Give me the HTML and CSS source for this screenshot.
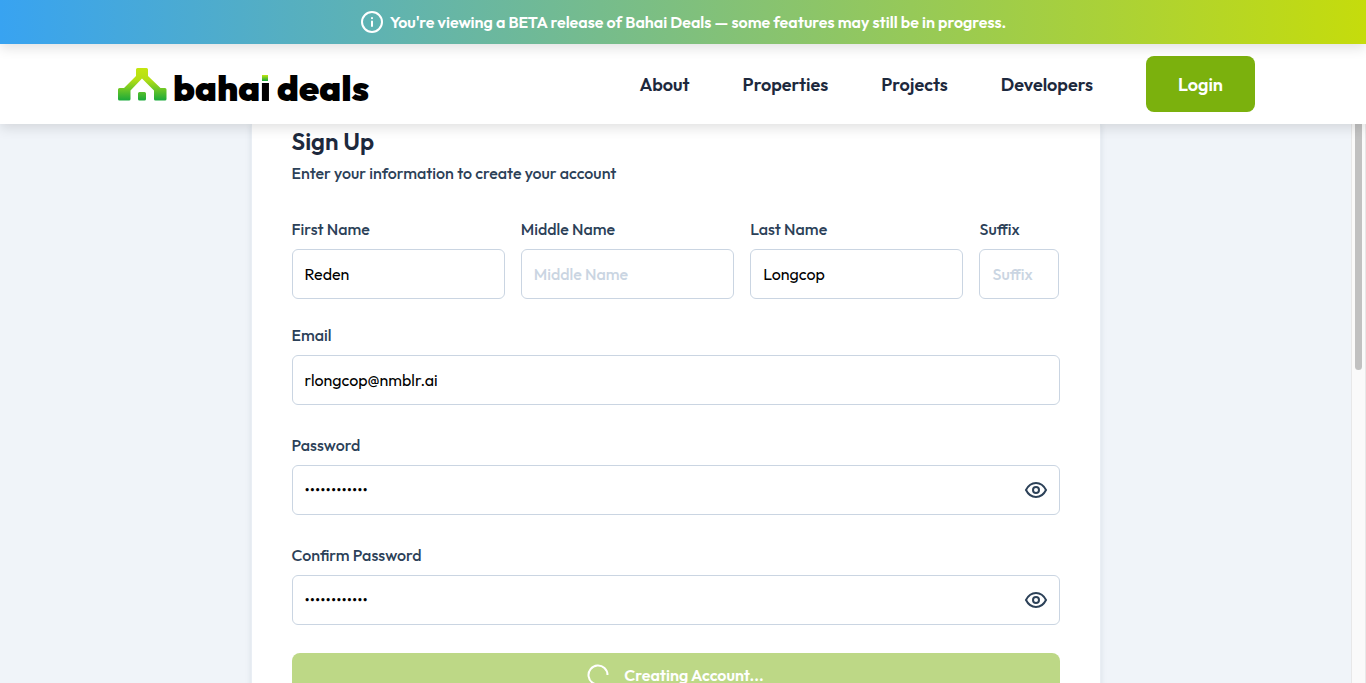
FILE: index.html
```html
<!DOCTYPE html>
<html lang="en">
<head>
<meta charset="utf-8">
<meta name="viewport" content="width=device-width, initial-scale=1">
<title>Sign Up | Bahai Deals</title>
<link rel="stylesheet" href="styles.css">
</head>
<body>
<div class="app">
  <header class="header">
    <div class="banner">
      <svg class="banner-icon" viewBox="0 0 24 24" fill="none" stroke="currentColor" stroke-width="2" stroke-linecap="round" aria-hidden="true"><circle cx="12" cy="12" r="10"/><path d="M12 11.5v4.5M12 8v.2"/></svg>
      <p>You're viewing a BETA release of Bahai Deals — some features may still be in progress.</p>
    </div>
    <div class="navbar">
      <div class="navbar-inner">
        <a class="logo" href="#">
          <svg class="logo-mark" viewBox="0 0 49 33" aria-hidden="true">
            <defs><linearGradient id="leaf" x1="0" y1="0" x2="0" y2="33" gradientUnits="userSpaceOnUse"><stop offset="0" stop-color="#c4e60f"/><stop offset=".35" stop-color="#b4df14"/><stop offset="1" stop-color="#16a83b"/></linearGradient></defs>
            <path fill="url(#leaf)" d="M18 1.500q0-1.500 1.500-1.500h9q1.500 0 1.500 1.500V8l12.500 12H47q1.500 0 1.500 1.500v9.500q0 1.500-1.500 1.500H37.500q-1.500 0-1.500-1.500v-8.500L24 10.500 12.500 22.500V31q0 1.500-1.500 1.500H1.500Q0 32.500 0 31v-9.500Q0 20 1.500 20H6L18 8zM20 25.500q0-1.500 1.500-1.500h5q1.500 0 1.500 1.500V31q0 1.500-1.500 1.500h-5Q20 32.500 20 31z"/>
          </svg>
          <span class="logo-text">baha<span class="logo-i">i</span> deals</span>
        </a>
        <nav class="nav">
          <a href="#">About</a>
          <a href="#">Properties</a>
          <a href="#">Projects</a>
          <a href="#">Developers</a>
          <button class="login" type="button">Login</button>
        </nav>
      </div>
    </div>
  </header>
  <main class="page">
    <form class="card">
      <h1>Sign Up</h1>
      <p class="lead">Enter your information to create your account</p>
      <div class="names">
        <div class="field"><label for="first">First Name</label><input id="first" type="text" value="Reden"></div>
        <div class="field"><label for="middle">Middle Name</label><input id="middle" type="text" placeholder="Middle Name"></div>
        <div class="field"><label for="last">Last Name</label><input id="last" type="text" value="Longcop"></div>
        <div class="field"><label for="suffix">Suffix</label><input id="suffix" type="text" placeholder="Suffix"></div>
      </div>
      <div class="stack">
        <div class="field"><label for="email">Email</label><input id="email" type="email" value="rlongcop@nmblr.ai"></div>
        <div class="field"><label for="password">Password</label>
          <div class="secret"><input id="password" type="password" value="abcdefghijkl">
            <button class="reveal" type="button" aria-label="Show password"><svg viewBox="0 0 24 24" aria-hidden="true"><path d="M2 12c2.300-4.600 5.700-7 10-7s7.700 2.400 10 7c-2.300 4.600-5.700 7-10 7s-7.700-2.400-10-7z"/><circle cx="12" cy="12" r="3"/></svg></button></div></div>
        <div class="field"><label for="confirm">Confirm Password</label>
          <div class="secret"><input id="confirm" type="password" value="abcdefghijkl">
            <button class="reveal" type="button" aria-label="Show confirmed password"><svg viewBox="0 0 24 24" aria-hidden="true"><path d="M2 12c2.300-4.600 5.700-7 10-7s7.700 2.400 10 7c-2.300 4.600-5.700 7-10 7s-7.700-2.400-10-7z"/><circle cx="12" cy="12" r="3"/></svg></button></div></div>
        <button class="submit" type="submit" disabled>
          <svg class="spinner" viewBox="0 0 22 22" aria-hidden="true"><path d="M13 20.300A9.500 9.500 0 1 1 20.500 11"/></svg>
          Creating Account...
        </button>
      </div>
    </form>
  </main>
  <div class="scrollbar" aria-hidden="true"><div class="thumb"></div></div>
</div>
</body>
</html>
```
FILE: styles.css
```css
* { box-sizing: border-box; }

body {
  margin: 0;
  background: #f0f4f9;
  color: #2c4158;
  font: 500 16px/24px Outfit, Lato, "Open Sans", sans-serif;
}

h1, p { margin: 0; }
a { color: inherit; text-decoration: none; }
button, input { font: inherit; }

.app {
  display: grid;
  grid-template: auto minmax(0, 1fr) / minmax(0, 1fr) 15px;
  height: 100vh;
  overflow: hidden;
}

.header {
  grid-column: 1 / -1;
  z-index: 1;
}

.banner {
  position: relative;
  z-index: 1;
  display: flex;
  align-items: center;
  justify-content: center;
  gap: 6px;
  padding: 10px 16px;
  background: linear-gradient(90deg, #38a3f1, #c5dc0c);
  box-shadow: 0 4px 12px rgba(0, 0, 0, .12);
  color: #fff;
  font-weight: 600;
}
.banner-icon { width: 24px; height: 24px; }

.navbar {
  background: #fff;
  box-shadow: 0 4px 12px rgba(0, 0, 0, .12);
}
.navbar-inner {
  display: flex;
  align-items: center;
  justify-content: space-between;
  max-width: 1144px;
  margin: 0 auto;
  padding: 12px 0;
}

.logo {
  display: flex;
  align-items: flex-end;
  gap: 6px;
  padding-left: 7px;
  color: #000;
}
.logo-mark { width: 49px; height: 33px; }
.logo-text {
  font-size: 36px;
  font-weight: 900;
  line-height: 26px;
}
.logo-i {
  position: relative;
  display: inline-block;
  background: linear-gradient(transparent 8px, #000 8px);
  background-clip: text;
  -webkit-background-clip: text;
  color: transparent;
}
.logo-i::before {
  content: "";
  position: absolute;
  top: 0;
  left: 2px;
  width: 6px;
  height: 6px;
  background: linear-gradient(#c4e60f, #16a83b);
}

.nav {
  display: flex;
  align-items: center;
  gap: 53px;
  color: #1d293d;
  font-size: 18px;
  font-weight: 600;
}
.nav a { padding-top: 2px; }
.login {
  padding: 17px 32px 15px;
  border: 0;
  border-radius: 8px;
  background: #7bb10d;
  color: #fff;
}

.page {
  min-height: 0;
  overflow: hidden;
}

.card {
  max-width: 850px;
  margin: 0 auto;
  padding: 1px 40px 40px;
  border: solid #e9eef4;
  border-width: 0 1px;
  background: #fff;
  box-shadow: 0 0 6px rgba(30, 50, 80, .1);
}
.card h1 {
  color: #1d293d;
  font-size: 24px;
  font-weight: 600;
  line-height: 32px;
}
.lead { margin: 4px 0 32px; }

.names {
  display: grid;
  grid-template-columns: repeat(3, minmax(0, 1fr)) 80px;
  gap: 16px;
  margin-bottom: 24px;
}
.stack { display: grid; gap: 28px; }
.field { display: grid; gap: 8px; }

.field input {
  width: 100%;
  height: 50px;
  padding: 0 12px;
  border: 1px solid #cad5e2;
  border-radius: 6px;
  background: #fff;
  color: #000;
  font-weight: 400;
}
.field input::placeholder { color: #cad5e2; font-weight: 500; }

.secret { position: relative; }
.reveal {
  position: absolute;
  inset: 0 12px 0 auto;
  display: flex;
  align-items: center;
  padding: 0;
  border: 0;
  background: none;
  color: #2c4158;
}
.reveal svg {
  width: 24px;
  height: 24px;
  fill: none;
  stroke: currentColor;
  stroke-width: 2;
}

.submit {
  display: flex;
  align-items: center;
  justify-content: center;
  gap: 15px;
  height: 44px;
  border: 0;
  border-radius: 8px;
  background: #bdd886;
  color: #fff;
  font-weight: 600;
}
.spinner {
  width: 22px;
  height: 22px;
  fill: none;
  stroke: currentColor;
  stroke-width: 2;
}

.scrollbar {
  padding: 0 3px;
  border: solid #e8e8e8;
  border-width: 0 1px;
  background: #fafafa;
}
.thumb {
  height: 44%;
  border-radius: 0 0 4px 4px;
  background: #c1c1c1;
}
```
